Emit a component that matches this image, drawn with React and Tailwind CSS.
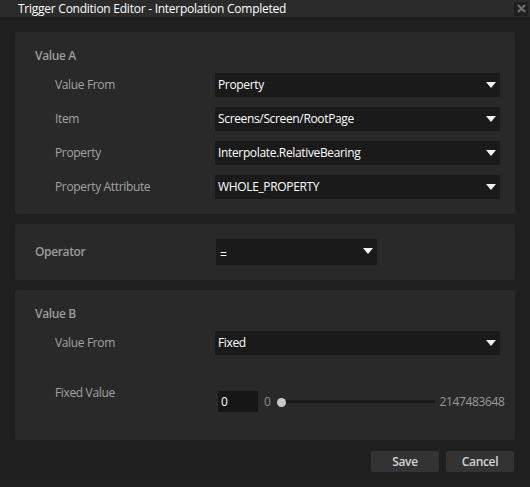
import React from 'react';

const font = { fontFamily: '"Open Sans", "Noto Sans", sans-serif' };

function Caret() {
  return (
    <svg width="10" height="6" viewBox="0 0 10 6" className="shrink-0">
      <path d="M0 0 H10 L5 6 Z" fill="#f2f2f2" />
    </svg>
  );
}

function Dropdown({ value, className = '' }) {
  return (
    <div className={`flex h-6 items-center justify-between bg-[#1a1a1a] pl-[3px] pr-[4px] text-[12px] text-white ${className}`}>
      <span>{value}</span>
      <Caret />
    </div>
  );
}

function Row({ label, value }) {
  return (
    <div className="flex items-center">
      <div className="w-[180px] shrink-0 pl-[20px] text-[12px] text-[#a3a3a3]">{label}</div>
      <Dropdown value={value} className="flex-1" />
    </div>
  );
}

function Header({ children }) {
  return <div className="h-4 text-[12px] leading-4 font-semibold text-[#9c9c9c]">{children}</div>;
}

export default function App() {
  return (
    <div className="flex h-[487px] w-[530px] flex-col bg-[#1f1f1f] tracking-[-0.35px] select-none" style={font}>
      <div className="flex h-[17px] items-center justify-between bg-[#2b2b2b]">
        <span className="pl-[18px] text-[12px] leading-none tracking-[-0.25px] text-white">
          Trigger Condition Editor - Interpolation Completed
        </span>
        <button className="mr-[2px] flex h-[14px] w-[14px] items-center justify-center bg-[#1f1f1f]">
          <svg width="9" height="9" viewBox="0 0 9 9">
            <path d="M1 1 L8 8 M8 1 L1 8" stroke="#6e6e6e" strokeWidth="2.2" />
          </svg>
        </button>
      </div>

      <div className="flex flex-col gap-[10px] px-[15px] pt-[15px]">
        <section className="rounded-[2px] bg-[#292929] pt-4 pr-[15px] pb-[15px] pl-5">
          <Header>Value A</Header>
          <div className="mt-[9px] flex flex-col gap-[10px]">
            <Row label="Value From" value="Property" />
            <Row label="Item" value="Screens/Screen/RootPage" />
            <Row label="Property" value="Interpolate.RelativeBearing" />
            <Row label="Property Attribute" value="WHOLE_PROPERTY" />
          </div>
        </section>

        <section className="flex items-center rounded-[2px] bg-[#292929] py-[15px] pl-5">
          <div className="w-[181px] shrink-0">
            <Header>Operator</Header>
          </div>
          <div className="flex h-[26px] w-[161px] items-start justify-between bg-[#1a1a1a] pl-[4px] pr-[4px] pt-[9px] text-[12px] text-white">
            <span className="leading-[14px]">=</span>
            <Caret />
          </div>
        </section>

        <section className="rounded-[2px] bg-[#292929] pt-4 pr-[15px] pb-[28px] pl-5">
          <Header>Value B</Header>
          <div className="mt-[9px]">
            <Row label="Value From" value="Fixed" />
          </div>
          <div className="mt-[30px] flex items-start">
            <div className="w-[180px] shrink-0 pl-[20px] text-[12px] leading-4 text-[#a3a3a3]">Fixed Value</div>
            <div className="mt-[6px] flex items-center">
              <div className="ml-[3px] flex h-[21px] w-[40px] items-center bg-[#161616] pl-[3px] text-[12px] text-white">0</div>
              <span className="ml-[6px] text-[12px] text-[#8c8c8c]">0</span>
              <div className="relative ml-[6px] flex h-[10px] w-[158px] items-center">
                <div className="h-[3px] w-full bg-[#1a1a1a]" />
                <div className="absolute left-0 top-[1px] h-[9px] w-[9px] rounded-full bg-[#c9c9c9]" />
              </div>
              <span className="ml-[5px] text-[12px] text-[#9a9a9a]">2147483648</span>
            </div>
          </div>
        </section>
      </div>

      <div className="flex justify-end gap-[7px] pt-[11px] pr-[16px]">
        <button className="h-[21px] w-[68px] rounded-[2px] bg-[#333333] text-[12px] font-semibold text-[#d4d4d4]">Save</button>
        <button className="h-[21px] w-[68px] rounded-[2px] bg-[#333333] text-[12px] font-semibold text-[#d4d4d4]">Cancel</button>
      </div>
    </div>
  );
}
